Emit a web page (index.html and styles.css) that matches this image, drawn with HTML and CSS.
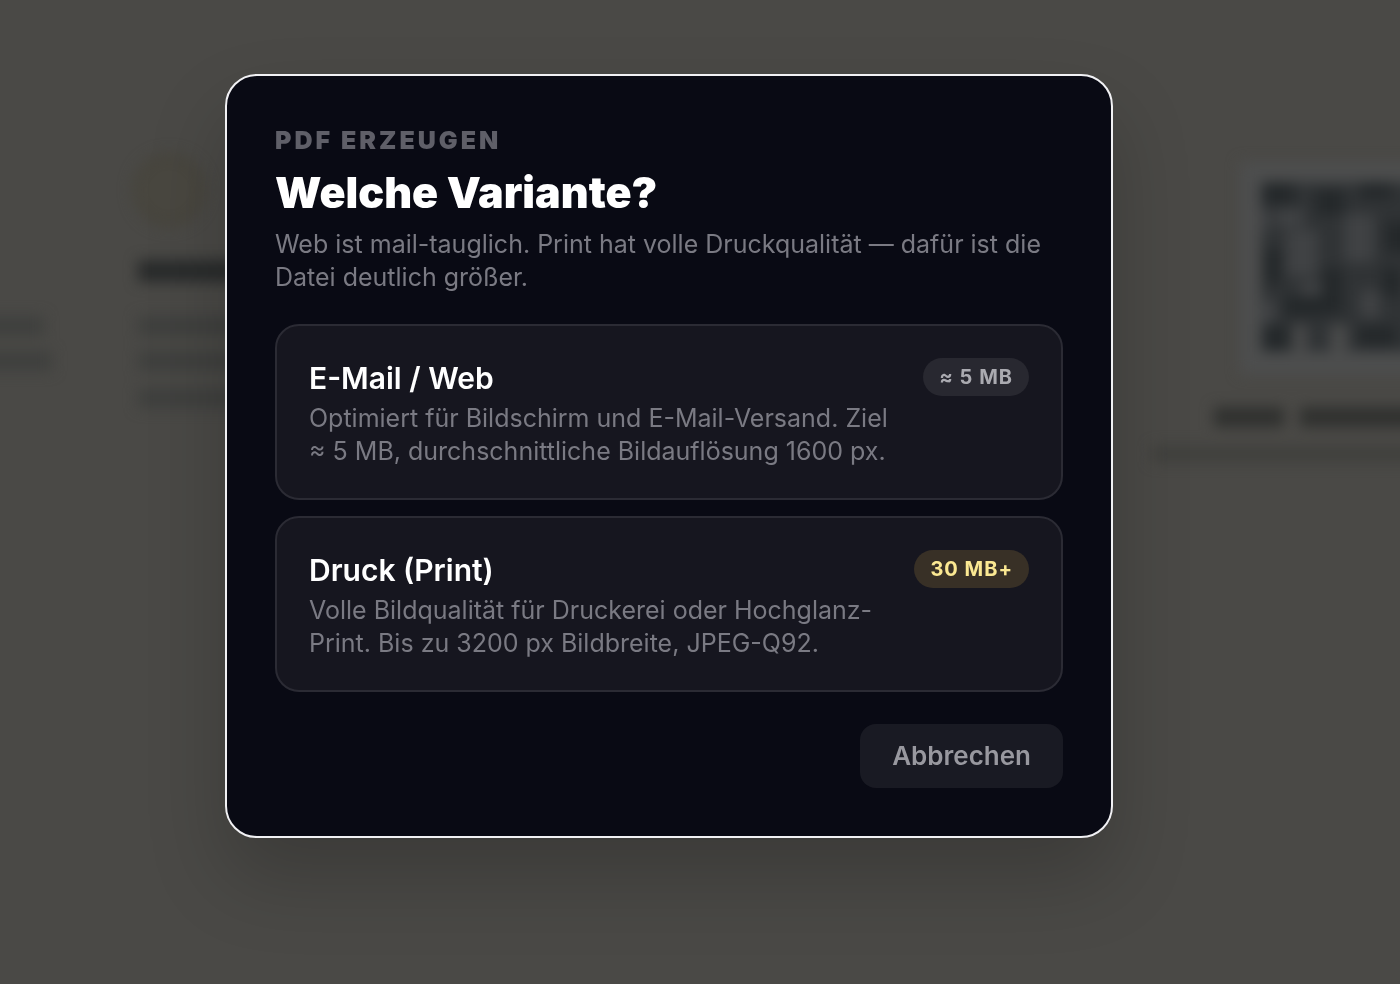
FILE: index.html
```html
<!DOCTYPE html>
<html lang="de">
<head>
<meta charset="utf-8">
<meta name="viewport" content="width=device-width, initial-scale=1">
<title>PDF erzeugen</title>
<link rel="stylesheet" href="styles.css">
</head>
<body>
<svg class="backdrop" aria-hidden="true" viewBox="0 0 1400 984" preserveAspectRatio="xMinYMin slice">
  <defs>
    <filter id="soft" x="-20%" y="-20%" width="140%" height="140%" color-interpolation-filters="sRGB"><feGaussianBlur stdDeviation="7"/></filter>
  </defs>
  <g filter="url(#soft)">
    <circle cx="169" cy="190" r="32" fill="#494740" stroke="#47453d" stroke-width="10"/>
    <path fill="#292b2b" d="M138 260h110v22H138z"/>
    <path fill="#3f403e" d="M138 316h110v20H138zM138 351h110v20H138zM138 388h110v20H138zM-20 316h64v20h-64zM-20 351h72v20h-72z"/>
    <path fill="#4d4e4e" d="M1240 162h180v212h-180z"/>
    <path fill="#303335" d="M1261 182h159v170h-159z"/>
    <path fill="#404244" d="M1276 209h28v18h-28zM1286 230h32v46h-32zM1344 214h30v48h-30zM1300 282h22v18h-22zM1360 290h20v28h-20zM1262 210h8v20h-8zM1262 300h14v24h-14z"/>
    <path fill="#4a4b4b" d="M1293 325h14v32h-14zM1330 325h18v32h-18z"/>
    <path fill="#24282a" d="M1262 182h32v22h-32zM1316 190h28v24h-28zM1360 182h32v16h-32zM1386 222h30v30h-30zM1265 248h16v36h-16zM1284 296h38v20h-38zM1322 268h20v46h-20zM1382 268h18v28h-18zM1264 325h24v25h-24zM1358 326h38v20h-38z"/>
    <path fill="#30312f" d="M1214 407h70v20h-70zM1300 407h120v20h-120z"/>
    <path fill="#40403d" d="M1152 446h268v16h-268z"/>
  </g>
</svg>
<div class="overlay">
  <main class="dialog" role="dialog" aria-modal="true" aria-labelledby="dialog-title">
    <header class="dialog-head">
      <p class="eyebrow">PDF ERZEUGEN</p>
      <h1 class="title" id="dialog-title">Welche Variante?</h1>
      <p class="copy">Web ist mail-tauglich. Print hat volle Druckqualität — dafür ist die Datei deutlich größer.</p>
    </header>
    <div class="options">
      <button class="option" type="button">
        <span class="option-body">
          <span class="option-title">E-Mail / Web</span>
          <span class="copy">Optimiert für Bildschirm und E-Mail-Versand. Ziel ≈&nbsp;5&nbsp;MB, durchschnittliche Bildauflösung 1600&nbsp;px.</span>
        </span>
        <span class="pill">≈ 5 MB</span>
      </button>
      <button class="option" type="button">
        <span class="option-body">
          <span class="option-title">Druck (Print)</span>
          <span class="copy">Volle Bildqualität für Druckerei oder Hochglanz-Print. Bis zu 3200 px Bildbreite, JPEG-Q92.</span>
        </span>
        <span class="pill pill-gold">30 MB+</span>
      </button>
    </div>
    <footer class="actions">
      <button class="cancel" type="button">Abbrechen</button>
    </footer>
  </main>
</div>
</body>
</html>
```
FILE: styles.css
```css
* { box-sizing: border-box; }

body {
  margin: 0;
  background: #4a4946;
  font-family: Inter, "Open Sans", sans-serif;
}

p, h1 { margin: 0; }

button { font-family: inherit; cursor: pointer; }

.backdrop {
  position: fixed;
  inset: 0;
  width: 100%;
  height: 100%;
}

.overlay {
  position: relative;
  min-height: 100vh;
  display: flex;
  align-items: center;
  justify-content: center;
  padding: 0 62px 72px 0;
}

.dialog {
  width: 100%;
  max-width: 888px;
  padding: 48px;
  border: 2px solid #f1f1f4;
  border-radius: 32px;
  background: #090a14;
  box-shadow: 0 40px 80px rgba(0, 0, 0, 0.2);
}

.dialog-head {
  display: flex;
  flex-direction: column;
  gap: 12px;
  margin-bottom: 30px;
}

.eyebrow {
  font-size: 25px;
  line-height: 32px;
  font-weight: 900;
  letter-spacing: 3px;
  color: #5f5f68;
}

.title {
  font-size: 43px;
  line-height: 48px;
  font-weight: 900;
  color: #fff;
}

.copy {
  font-size: 25px;
  line-height: 33px;
  font-weight: 400;
  color: #7a7a83;
}

.options {
  display: flex;
  flex-direction: column;
  gap: 16px;
}

.option {
  display: flex;
  align-items: flex-start;
  justify-content: space-between;
  gap: 16px;
  padding: 32px 32px 30px;
  border: 2px solid #2b2b34;
  border-radius: 24px;
  background: #16161f;
  text-align: left;
}

.option-body {
  display: flex;
  flex-direction: column;
  gap: 4px;
}

.option-title {
  font-size: 30px;
  line-height: 40px;
  font-weight: 600;
  color: #fff;
}

.pill {
  flex: none;
  padding: 0 16px;
  border-radius: 19px;
  background: #282830;
  color: #aaaab0;
  font-size: 20px;
  line-height: 38px;
  font-weight: 700;
  letter-spacing: 1px;
}

.pill-gold {
  background: #383026;
  color: #fbe892;
}

.actions {
  display: flex;
  justify-content: flex-end;
  margin-top: 32px;
}

.cancel {
  padding: 0 32px;
  border: 0;
  border-radius: 16px;
  background: #191a23;
  color: #98989f;
  font-size: 26px;
  line-height: 64px;
  font-weight: 600;
}
```
